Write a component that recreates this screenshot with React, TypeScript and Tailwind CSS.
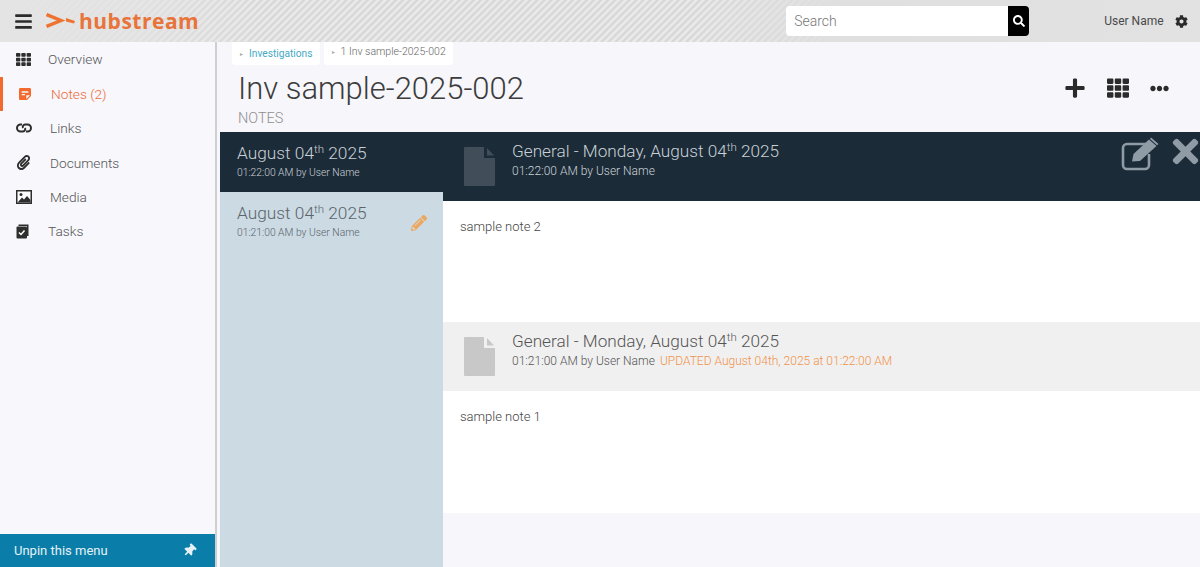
import {
  FaBars,
  FaCog,
  FaEllipsisH,
  FaPaperclip,
  FaPencilAlt,
  FaPlus,
  FaSearch,
  FaTh,
  FaThumbtack,
  FaTimes,
} from 'react-icons/fa'
import { MdStickyNote2 } from 'react-icons/md'

function LinkIcon() {
  return (
    <svg width="16" height="12" viewBox="0 0 16 12" fill="none" stroke="currentColor" strokeWidth="2">
      <path d="M6 2.5 H4.5 A3.5 3.5 0 0 0 4.5 9.5 H7 A2.5 2.5 0 0 0 9 6" />
      <path d="M10 9.5 H11.5 A3.5 3.5 0 0 0 11.5 2.5 H9 A2.5 2.5 0 0 0 7 6" />
    </svg>
  )
}

function MediaIcon() {
  return (
    <svg width="16" height="14" viewBox="0 0 16 14">
      <rect x="0.75" y="0.75" width="14.5" height="12.5" fill="#fff" stroke="currentColor" strokeWidth="1.5" />
      <circle cx="5" cy="4.5" r="1.5" fill="currentColor" />
      <path d="M2 12 L6 7.5 L8 9.5 L11 6 L14.5 10 V12.5 H2 Z" fill="currentColor" />
    </svg>
  )
}

function TaskIcon() {
  return (
    <svg width="13" height="15" viewBox="0 0 13 15">
      <path d="M2.5 0.5 H12.5 V12 H11 V2 H2.5 Z" fill="currentColor" />
      <rect x="0.5" y="2.5" width="10.5" height="12" rx="1" fill="currentColor" />
      <path d="M3 8.5 L5 10.5 L8.5 6.5" fill="none" stroke="#fff" strokeWidth="1.5" />
    </svg>
  )
}

function DocIcon({ color }: { color: string }) {
  return (
    <svg width="31" height="39" viewBox="0 0 31 39" className={color}>
      <path d="M1 0 H20 V11 H31 V38 A1 1 0 0 1 30 39 H1 A1 1 0 0 1 0 38 V1 A1 1 0 0 1 1 0 Z" fill="currentColor" />
      <path d="M23 1 L30 8.5 H23 Z" fill="currentColor" />
    </svg>
  )
}

function EditIcon() {
  return (
    <svg width="38" height="34" viewBox="0 0 38 34" fill="none" stroke="currentColor">
      <path d="M26 7 H6 A4 4 0 0 0 2 11 V28 A4 4 0 0 0 6 32 H24 A4 4 0 0 0 28 28 V17" strokeWidth="2.6" />
      <path d="M11 24.5 L12.5 17 L28 2.5 L35.5 9 L19 24 Z" fill="currentColor" stroke="none" />
      <path d="M30 0.5 L37.5 7 L36 8.2 L29 2 Z" fill="currentColor" stroke="none" />
    </svg>
  )
}

const navItems = [
  { label: 'Overview', icon: <FaTh size={15} />, iconBox: 'w-[48px]' },
  { label: 'Links', icon: <LinkIcon />, iconBox: 'w-[50px]' },
  { label: 'Documents', icon: <FaPaperclip size={15} />, iconBox: 'w-[50px]' },
  { label: 'Media', icon: <MediaIcon />, iconBox: 'w-[50px]' },
  { label: 'Tasks', icon: <TaskIcon />, iconBox: 'w-[48px]' },
]

function NavRow({ label, icon, iconBox }: { label: string; icon: React.ReactNode; iconBox: string }) {
  return (
    <div className="flex h-[34.4px] items-center text-[13.7px] font-light text-[#555555]">
      <div className={`flex items-center pl-[16px] text-[#2e2e2e] ${iconBox}`}>{icon}</div>
      <span>{label}</span>
    </div>
  )
}

function NoteHeader({
  dark,
  time,
  updated,
  actions,
}: {
  dark?: boolean
  time: string
  updated?: string
  actions?: boolean
}) {
  return (
    <div className={`flex h-[69px] items-start ${dark ? 'bg-[#1c2b38] text-[#c9d1d7]' : 'bg-[#f0f0f0] text-[#555555]'}`}>
      <div className="ml-[21px] mt-[15px]">
        <DocIcon color={dark ? 'text-[#414e5a]' : 'text-[#c8c8c8]'} />
      </div>
      <div className="ml-[17px] mt-[6.5px]">
        <div className="text-[17.2px] font-light leading-[24px]">
          General - Monday, August 04<sup className="text-[11.5px]">th</sup> 2025
        </div>
        <div className="mt-[0.5px] text-[12px] font-light leading-[16px]">
          {time} by User Name
          {updated && <span className="ml-[5px] text-[#f0924a]">{updated}</span>}
        </div>
      </div>
      {actions && (
        <div className="ml-auto flex items-start gap-[8px] text-[#8f9ba5]">
          <div className="mt-[5px]">
            <EditIcon />
          </div>
          <FaTimes size={37} className="mt-[1px] mr-[-4px]" />
        </div>
      )}
    </div>
  )
}

export default function App() {
  return (
    <div className="flex h-[567px] w-[1200px] flex-col overflow-hidden bg-[#f6f6fb] font-['Roboto',sans-serif]">
      {/* top bar */}
      <header className="flex h-[42px] shrink-0 items-center bg-[#dedede] bg-[linear-gradient(90deg,#e4e4e4_0%,rgba(228,228,228,0.7)_12%,rgba(224,224,224,0)_22%,rgba(224,224,224,0)_58%,#dfdfdf_70%,#e2e2e2_100%),repeating-linear-gradient(135deg,#d4d4d4_0px,#eeeeee_2.5px,#d4d4d4_5px)]">
        <FaBars size={19} className="ml-[14px] text-[#2b2b2b]" />
        <svg className="ml-[13px]" width="30" height="16" viewBox="0 0 30 16">
          <path d="M0.5 1.5 L15 7.5 L0.5 13.5" fill="none" stroke="#ee7331" strokeWidth="3.4" />
          <path d="M20 5 L29 8 L28 10.5 L20 8.5 Z" fill="#ee7331" />
        </svg>
        <span className="ml-[3px] font-['Open_Sans',sans-serif] text-[21px] font-bold leading-none tracking-[0.5px] text-[#e8743a]">
          hubstream
        </span>
        <div className="ml-[587px] flex h-[30px] w-[243px] items-stretch">
          <div className="flex flex-1 items-center rounded-l-[4px] bg-white pl-[8px] text-[14px] font-light text-[#777777]">Search</div>
          <div className="flex w-[21px] items-center justify-center rounded-r-[4px] bg-black text-white">
            <FaSearch size={12} />
          </div>
        </div>
        <span className="ml-[75px] text-[12px] text-[#4a4a4a]">User Name</span>
        <FaCog size={13} className="ml-[11px] text-[#2b2b2b]" />
      </header>

      <div className="flex min-h-0 flex-1">
        {/* sidebar */}
        <aside className="flex w-[217px] shrink-0 flex-col justify-between border-r-[2px] border-[#cfcfcf] bg-[#f7f7fc]">
          <nav className="pt-[0.5px]">
            <NavRow {...navItems[0]} />
            <div className="flex h-[34.4px] items-center border-l-[3px] border-[#f26a2e] text-[13.7px] font-light text-[#ee6a35]">
              <div className="flex w-[48px] items-center pl-[14px] text-[#f26a2e]">
                <MdStickyNote2 size={16} />
              </div>
              <span>Notes (2)</span>
            </div>
            {navItems.slice(1).map((item) => (
              <NavRow key={item.label} {...item} />
            ))}
          </nav>
          <div className="flex h-[33px] items-center justify-between bg-[#0a7ea8] pl-[14px] pr-[19px] text-[13px] text-[#e6f2f7]">
            <span>Unpin this menu</span>
            <FaThumbtack size={13} className="rotate-45" />
          </div>
        </aside>

        {/* main */}
        <main className="flex min-w-0 flex-1 flex-col pl-[3px]">
          <div className="flex h-[90px] shrink-0 flex-col">
            <div className="flex items-start gap-[4px] pl-[12px]">
              <div className="flex h-[23px] items-center rounded-b-[3px] bg-white pl-[8px] pr-[7px] text-[10.2px] text-[#45a9c4]">
                <span className="mr-[6px] text-[6px] text-[#aaaaaa]">▸</span>Investigations
              </div>
              <div className="flex h-[23px] items-start rounded-b-[3px] bg-white pl-[8px] pr-[7px] pt-[2px] text-[10.5px] font-light text-[#666666]">
                <span className="mr-[6px] mt-[3px] text-[6px] text-[#aaaaaa]">▸</span>1 Inv sample-2025-002
              </div>
            </div>
            <div className="flex items-start justify-between pl-[18px]">
              <div>
                <h1 className="mt-[5px] text-[31px] font-light leading-[38px] text-[#3c3c3c]">Inv sample-2025-002</h1>
                <div className="mt-[3px] text-[14.5px] font-light leading-[16px] text-[#8f8f8f]">NOTES</div>
              </div>
              <div className="mt-[12px] mr-[31px] flex items-center gap-[21px] text-[#2b2b2b]">
                <FaPlus size={22} />
                <FaTh size={22} />
                <FaEllipsisH size={19} />
              </div>
            </div>
          </div>

          <div className="flex min-h-0 flex-1">
            <div className="w-[223px] shrink-0 bg-[#ccdae3]">
              <div className="h-[60px] bg-[#1c2b38] pl-[17px] pt-[8.5px] text-[#c9d1d7]">
                <div className="text-[17.3px] font-light leading-[24px]">
                  August 04<sup className="text-[11.5px]">th</sup> 2025
                </div>
                <div className="text-[10.3px] font-light leading-[15px]">01:22:00 AM by User Name</div>
              </div>
              <div className="relative h-[60px] pl-[17px] pt-[8.5px] text-[#5a646c]">
                <div className="text-[17.3px] font-light leading-[24px]">
                  August 04<sup className="text-[11.5px]">th</sup> 2025
                </div>
                <div className="text-[10.3px] font-light leading-[15px]">01:21:00 AM by User Name</div>
                <FaPencilAlt size={16} className="absolute right-[16px] top-[23px] text-[#eda860]" />
              </div>
            </div>

            <div className="min-w-0 flex-1">
              <NoteHeader dark time="01:22:00 AM" actions />
              <div className="h-[121px] bg-white pl-[17px] pt-[17px] text-[13px] font-light leading-[18px] text-[#444444]">sample note 2</div>
              <NoteHeader time="01:21:00 AM" updated="UPDATED August 04th, 2025 at 01:22:00 AM" />
              <div className="h-[122px] bg-white pl-[17px] pt-[17px] text-[13px] font-light leading-[18px] text-[#444444]">sample note 1</div>
            </div>
          </div>
        </main>
      </div>
    </div>
  )
}
